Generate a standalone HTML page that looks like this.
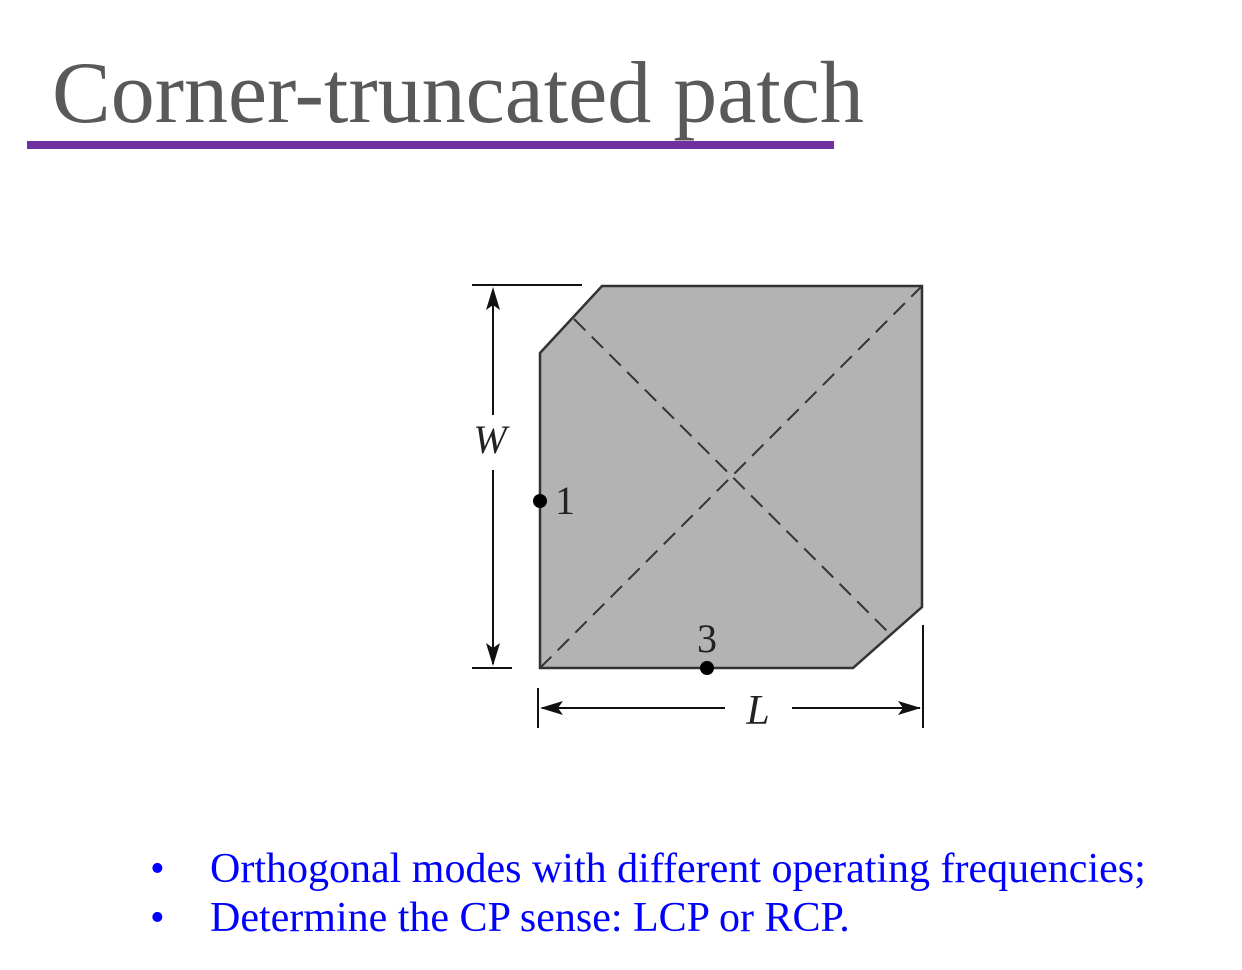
<!DOCTYPE html>
<html><head><style>
body{margin:0;width:1242px;height:970px;background:#fff;position:relative;overflow:hidden;font-family:"Liberation Serif",serif}
.t{position:absolute;left:52px;top:50px;font-size:88px;color:#595959;line-height:1;white-space:nowrap}
.u{position:absolute;left:27px;top:141px;width:807px;height:8px;background:#7030A0}
.b{position:absolute;left:210px;font-size:42px;color:#0000FF;white-space:nowrap;line-height:1}
.d{position:absolute;left:150px;font-size:42px;color:#0000FF;line-height:1}
</style></head><body>
<div class="t">Corner-truncated patch</div>
<div class="u"></div>
<svg width="1242" height="970" style="position:absolute;left:0;top:0" font-family="Liberation Serif, serif">
<polygon points="540,353 602,286 922,286 922,607 853,668 540,668" fill="#b3b3b3" stroke="#333" stroke-width="2.5"/>
<line x1="574" y1="319" x2="889" y2="633" stroke="#333" stroke-width="2" stroke-dasharray="16,9"/>
<line x1="540" y1="668" x2="922" y2="286" stroke="#333" stroke-width="2" stroke-dasharray="16,9"/>
<line x1="472" y1="285" x2="582" y2="285" stroke="#111" stroke-width="2"/>
<line x1="472" y1="668" x2="512" y2="668" stroke="#111" stroke-width="2"/>
<line x1="493" y1="290" x2="493" y2="415" stroke="#111" stroke-width="2"/>
<line x1="493" y1="470" x2="493" y2="664" stroke="#111" stroke-width="2"/>
<polygon points="493,287 486,310 493,305 500,310" fill="#111"/>
<polygon points="493,666 486,643 493,648 500,643" fill="#111"/>
<text x="490" y="453" font-size="40" font-style="italic" text-anchor="middle" fill="#222">W</text>
<circle cx="540" cy="501" r="7" fill="#000"/>
<text x="555" y="514" font-size="40" fill="#222">1</text>
<circle cx="707" cy="668" r="7" fill="#000"/>
<text x="707" y="652" font-size="40" text-anchor="middle" fill="#222">3</text>
<line x1="538" y1="688" x2="538" y2="728" stroke="#111" stroke-width="2"/>
<line x1="923" y1="625" x2="923" y2="728" stroke="#111" stroke-width="2"/>
<line x1="542" y1="708" x2="725" y2="708" stroke="#111" stroke-width="2"/>
<line x1="792" y1="708" x2="920" y2="708" stroke="#111" stroke-width="2"/>
<polygon points="540,708 563,701 558,708 563,715" fill="#111"/>
<polygon points="921,708 898,701 903,708 898,715" fill="#111"/>
<text x="758" y="724" font-size="42" font-style="italic" text-anchor="middle" fill="#222">L</text>
</svg>
<div class="d" style="top:848px">•</div>
<div class="b" style="top:848px">Orthogonal modes with different operating frequencies;</div>
<div class="d" style="top:897px">•</div>
<div class="b" style="top:897px">Determine the CP sense: LCP or RCP.</div>
</body></html>
